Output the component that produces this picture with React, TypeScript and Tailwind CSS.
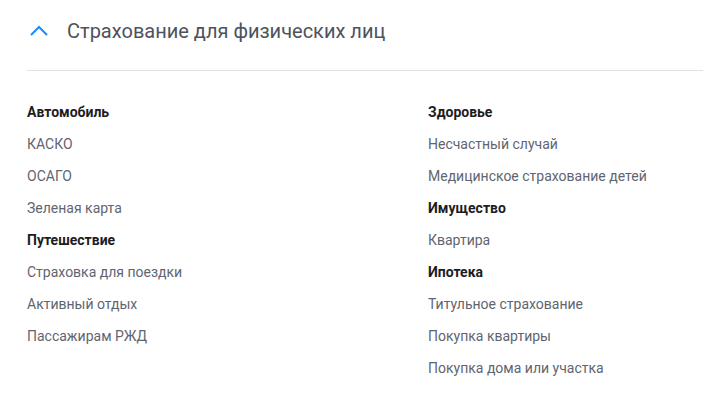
import React from "react";

type Item = { text: string; bold?: boolean };

const left: Item[] = [
  { text: "Автомобиль", bold: true },
  { text: "КАСКО" },
  { text: "ОСАГО" },
  { text: "Зеленая карта" },
  { text: "Путешествие", bold: true },
  { text: "Страховка для поездки" },
  { text: "Активный отдых" },
  { text: "Пассажирам РЖД" },
];

const right: Item[] = [
  { text: "Здоровье", bold: true },
  { text: "Несчастный случай" },
  { text: "Медицинское страхование детей" },
  { text: "Имущество", bold: true },
  { text: "Квартира" },
  { text: "Ипотека", bold: true },
  { text: "Титульное страхование" },
  { text: "Покупка квартиры" },
  { text: "Покупка дома или участка" },
];

function Col({ items }: { items: Item[] }) {
  return (
    <div className="flex flex-col">
      {items.map((it) => (
        <div
          key={it.text}
          className={
            it.bold
              ? "h-[32px] flex items-center text-[14px] font-bold text-[#1d1d1f]"
              : "h-[32px] flex items-center text-[14px] text-[#5f6570]"
          }
        >
          {it.text}
        </div>
      ))}
    </div>
  );
}

export default function App() {
  return (
    <div className="w-[703px] h-[400px] bg-white pl-[27px] font-['Roboto',sans-serif]">
      <div className="h-[71px] pb-[9px] flex items-center border-b border-[#e2e2e2]">
        <svg width="18" height="11" viewBox="0 0 18 11" className="ml-[3px]">
          <path d="M1 10 L9 2 L17 10" fill="none" stroke="#1a8cff" strokeWidth="2" />
        </svg>
        <span className="ml-[19px] text-[20px] text-[#4d535c]">Страхование для физических лиц</span>
      </div>
      <div className="mt-[25px] grid grid-cols-[401px_1fr]">
        <Col items={left} />
        <Col items={right} />
      </div>
    </div>
  );
}
